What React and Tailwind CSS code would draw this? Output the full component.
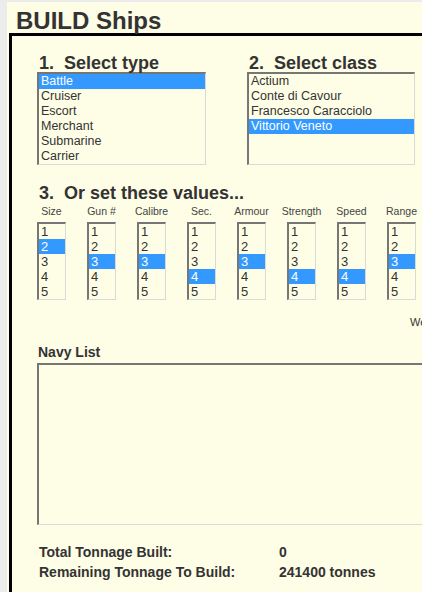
import React from "react";

const types = ["Battle", "Cruiser", "Escort", "Merchant", "Submarine", "Carrier"];
const classes = ["Actium", "Conte di Cavour", "Francesco Caracciolo", "Vittorio Veneto"];

const values = [
  { label: "Size", sel: 2 },
  { label: "Gun #", sel: 3 },
  { label: "Calibre", sel: 3 },
  { label: "Sec.", sel: 4 },
  { label: "Armour", sel: 3 },
  { label: "Strength", sel: 4 },
  { label: "Speed", sel: 4 },
  { label: "Range", sel: 3 },
];

const ListBox = ({ items, selected, width, rows }) => {
  return (
    <div
      className={`${width} border-t-2 border-l-2 border-b border-r border-t-[#767676] border-l-[#767676] border-b-[#d9d9d9] border-r-[#d9d9d9] bg-[#fefde6]`}
      style={{ height: rows * 15 + 3 }}
    >
      {items.map((item) => (
        <div
          key={item}
          className={
            item === selected
              ? "h-[15px] leading-[15px] pl-[2px] whitespace-nowrap bg-[#3399ff] text-white"
              : "h-[15px] leading-[15px] pl-[2px] whitespace-nowrap text-[#333]"
          }
        >
          {item}
        </div>
      ))}
    </div>
  );
};

const App = () => {
  return (
    <div
      className="w-[422px] h-[592px] overflow-hidden bg-[#ececec] pl-[7px] pt-[2px]"
      style={{ fontFamily: '"Liberation Sans", Arial, sans-serif' }}
    >
      <div className="w-[700px] h-[700px] bg-[#fefde6] pl-[2px]">
        <h1 className="ml-[7px] pt-[7px] text-[24px] leading-[24px] font-bold text-[#333]">
          BUILD Ships
        </h1>

        <div className="w-[650px] h-[640px] border-t-[3px] border-l-[3px] border-black pl-[25px] pt-[18px]">
          <div className="flex">
            <div className="w-[210px]">
              <h2 className="pl-[2px] text-[18px] leading-[18px] font-bold text-[#333] whitespace-pre">
                {"1.  Select type"}
              </h2>
              <div className="text-[12.5px]">
                <ListBox items={types} selected="Battle" width="w-[169px]" rows={6} />
              </div>
            </div>
            <div className="w-[210px]">
              <h2 className="pl-[2px] text-[18px] leading-[18px] font-bold text-[#333] whitespace-pre">
                {"2.  Select class"}
              </h2>
              <div className="text-[12.5px]">
                <ListBox items={classes} selected="Vittorio Veneto" width="w-[168px]" rows={6} />
              </div>
            </div>
          </div>

          <h2 className="mt-[19px] pl-[2px] text-[18px] leading-[18px] font-bold text-[#333] whitespace-pre">
            {"3.  Or set these values..."}
          </h2>
          <div className="flex gap-[21px]">
            {values.map((v) => (
              <div key={v.label} className="w-[29px] flex flex-col items-center">
                <div className="mt-[3px] text-[10.5px] leading-[13px] text-[#444] whitespace-nowrap">
                  {v.label}
                </div>
                <div className="mt-[4px] text-[13px]">
                  <ListBox
                    items={["1", "2", "3", "4", "5"]}
                    selected={String(v.sel)}
                    width="w-[29px]"
                    rows={5}
                  />
                </div>
              </div>
            ))}
          </div>

          <div className="mt-[16px] pl-[373px] text-[11px] leading-[13px] text-[#333] whitespace-nowrap">
            Weight: 0
          </div>

          <h3 className="mt-[15px] pl-[1px] text-[14px] leading-[16px] font-bold text-[#333]">
            Navy List
          </h3>
          <div className="mt-[3px] w-[520px] h-[162px] border-t-2 border-l-2 border-b border-t-[#767676] border-l-[#767676] border-b-[#d9d9d9]"></div>

          <div className="mt-[17px] pl-[2px] grid grid-cols-[240px_1fr] text-[14px] leading-[20px] font-bold text-[#333]">
            <div>Total Tonnage Built:</div>
            <div>0</div>
            <div>Remaining Tonnage To Build:</div>
            <div>241400 tonnes</div>
          </div>
        </div>
      </div>
    </div>
  );
};

export default App;
